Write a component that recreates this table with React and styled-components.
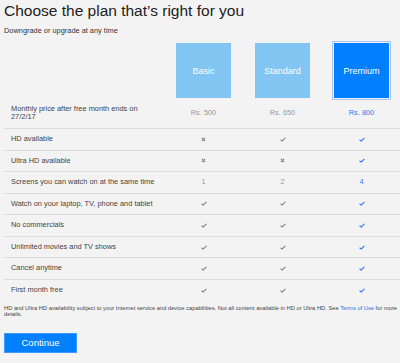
import React from "react";
import styled, { createGlobalStyle } from "styled-components";

const Global = createGlobalStyle`
  html, body { margin: 0; padding: 0; overflow: hidden; background: #f3f3f3; }
  body { font-family: "Liberation Sans", Arial, sans-serif; }
`;

const Page = styled.div`
  width: 400px;
  height: 363px;
  padding-left: 4px;
  box-sizing: border-box;
  background: #f3f3f3;
`;

const Title = styled.h1`
  margin: 0;
  padding-top: 1px;
  font-size: 15.5px;
  line-height: 20px;
  font-weight: normal;
  color: #222;
`;

const Subtitle = styled.p`
  margin: 4.5px 0 0;
  font-size: 7.4px;
  line-height: 9px;
  color: #333;
`;

const Table = styled.div`
  width: 397px;
  margin-top: 8.5px;
`;

const Row = styled.div`
  display: grid;
  grid-template-columns: 160px repeat(3, 79px);
  align-items: center;
  box-sizing: border-box;
  height: ${(p) => p.$h || 21.57}px;
  border-bottom: ${(p) => (p.$last ? "none" : "1px solid #dcdcdc")};
`;

const HeaderRow = styled.div`
  display: grid;
  grid-template-columns: 160px repeat(3, 79px);
  height: 55px;
`;

const PlanBox = styled.div`
  justify-self: center;
  width: 55px;
  height: 55px;
  display: flex;
  align-items: center;
  justify-content: center;
  background: ${(p) => (p.$selected ? "#0080ff" : "#82c4f2")};
  color: #fff;
  font-size: 9px;
  box-shadow: ${(p) =>
    p.$selected ? "0 0 0 1px #eef3fb, 0 0 0 2px #a9c4ee" : "none"};
`;

const Label = styled.div`
  padding: 0 1px 0 7px;
  font-size: 7.4px;
  line-height: 8.5px;
  color: #444;
`;

const Cell = styled.div`
  display: flex;
  justify-content: center;
  align-items: center;
  font-size: 7.4px;
  line-height: 8.5px;
  color: ${(p) => (p.$hl ? "#2f7cf0" : "#9a9a9a")};
`;

const Note = styled.p`
  margin: 3px 0 0;
  font-size: 5.75px;
  line-height: 6.6px;
  color: #444;
  width: 394px;
`;

const NoteLine = styled.span``;

const Link = styled.a`
  color: #3a6fe0;
  text-decoration: none;
`;

const Button = styled.button`
  margin-top: 15px;
  width: 73px;
  height: 20px;
  padding: 0;
  border: 1px solid #3f97ff;
  background: #0080ff;
  color: #fff;
  font-family: "Liberation Sans", Arial, sans-serif;
  font-size: 9.5px;
  cursor: pointer;
`;

const Check = ({ hl }) => (
  <svg width="6" height="5" viewBox="0 0 6 5">
    <path
      d="M0.6 2.8 L2.2 4.1 L5.4 0.8"
      fill="none"
      stroke={hl ? "#2f6ff0" : "#7d7d7d"}
      strokeWidth="1.1"
    />
  </svg>
);

const Cross = () => (
  <svg width="5" height="5" viewBox="0 0 5 5">
    <path d="M0.9 0.9 L4.1 4.1 M4.1 0.9 L0.9 4.1" stroke="#808080" strokeWidth="1.1" />
  </svg>
);

const features = [
  { label: "HD available", v: ["x", "c", "c"] },
  { label: "Ultra HD available", v: ["x", "x", "c"] },
  { label: "Screens you can watch on at the same time", v: ["1", "2", "4"] },
  { label: "Watch on your laptop, TV, phone and tablet", v: ["c", "c", "c"] },
  { label: "No commercials", v: ["c", "c", "c"] },
  { label: "Unlimited movies and TV shows", v: ["c", "c", "c"] },
  { label: "Cancel anytime", v: ["c", "c", "c"] },
  { label: "First month free", v: ["c", "c", "c"] },
];

const renderVal = (v, hl) => {
  if (v === "c") return <Check hl={hl} />;
  if (v === "x") return <Cross />;
  return v;
};

export default function App() {
  return (
    <Page>
      <Global />
      <Title>Choose the plan that’s right for you</Title>
      <Subtitle>Downgrade or upgrade at any time</Subtitle>
      <Table>
        <HeaderRow>
          <div />
          <PlanBox>Basic</PlanBox>
          <PlanBox>Standard</PlanBox>
          <PlanBox $selected>Premium</PlanBox>
        </HeaderRow>
        <Row $h={31}>
          <Label>Monthly price after free month ends on 27/2/17</Label>
          <Cell>Rs. 500</Cell>
          <Cell>Rs. 650</Cell>
          <Cell $hl>Rs. 800</Cell>
        </Row>
        {features.map((f, i) => (
          <Row key={f.label} $last={i === features.length - 1}>
            <Label>{f.label}</Label>
            {f.v.map((v, j) => (
              <Cell key={j} $hl={j === 2}>
                {renderVal(v, j === 2)}
              </Cell>
            ))}
          </Row>
        ))}
      </Table>
      <Note>
        <NoteLine>
          HD and Ultra HD availability subject to your Internet service and device
          capabilities. Not all content available in HD or Ultra HD. See{" "}
        </NoteLine>
        <Link href="#">Terms of Use</Link>
        <NoteLine> for more</NoteLine> <NoteLine>details.</NoteLine>
      </Note>
      <Button>Continue</Button>
    </Page>
  );
}
